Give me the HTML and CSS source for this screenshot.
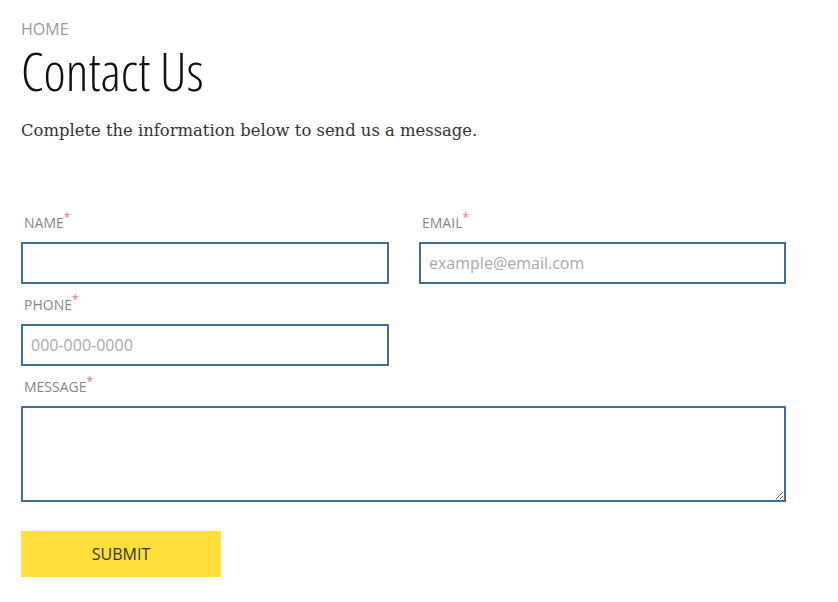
FILE: index.html
```html
<!DOCTYPE html>
<html>
<head>
<meta charset="utf-8">
<link rel="stylesheet" href="styles.css">
</head>
<body>
<div class="page">
  <div class="crumb">HOME</div>
  <h1 class="title">Contact Us</h1>
  <p class="intro">Complete the information below to send us a message.</p>
  <form class="form">
    <div class="row">
      <div class="field">
        <label class="label">NAME<span class="req">*</span></label>
        <input class="input" type="text">
      </div>
      <div class="field">
        <label class="label">EMAIL<span class="req">*</span></label>
        <input class="input" type="text" placeholder="example@email.com">
      </div>
    </div>
    <div class="row">
      <div class="field">
        <label class="label">PHONE<span class="req">*</span></label>
        <input class="input" type="text" placeholder="000-000-0000">
      </div>
      <div class="field"></div>
    </div>
    <div class="field">
      <label class="label">MESSAGE<span class="req">*</span></label>
      <textarea class="textarea"></textarea>
    </div>
    <button class="submit" type="button">SUBMIT</button>
  </form>
</div>
</body>
</html>
```
FILE: styles.css
```css
html, body { margin: 0; padding: 0; background: #fff; }
body { font-family: "Open Sans", sans-serif; }
.page { padding: 19px 21px 0 21px; width: 765px; }
.crumb { font-size: 16px; color: #9a9a9a; line-height: 20px; }
.title {
  margin: 6px 0 0 0;
  font-family: "Open Sans", sans-serif;
  font-weight: 300;
  font-stretch: 75%;
  font-size: 53px;
  line-height: 52px;
  color: #111;
}
.intro {
  margin: 23px 0 0 0;
  font-family: "DejaVu Serif", serif;
  font-size: 16.4px;
  color: #333;
  line-height: 22px;
}
.form { margin-top: 71px; display: flex; flex-direction: column; }
.row { display: grid; grid-template-columns: 368px 367px; column-gap: 30px; }
.field { display: flex; flex-direction: column; }
.label { font-size: 14px; color: #888; padding-left: 3px; line-height: 20px; height: 20px; margin-bottom: 9px; }
.req { color: #f07070; position: relative; top: -6px; font-size: 12px; }
.input {
  box-sizing: border-box; height: 42px; border: 2px solid #416e9a; padding: 0 8px;
  font-family: "Open Sans", sans-serif; font-size: 16px; color: #333; outline: none; margin-bottom: 11px;
  width: 100%;
}
.input::placeholder { color: #aaa; }
.textarea {
  box-sizing: border-box; height: 96px; width: 765px; border: 2px solid #416e9a;
  font-family: "Open Sans", sans-serif; font-size: 16px; margin: 0; resize: both; outline: none;
}
.submit {
  margin-top: 29px; width: 200px; height: 46px; background: #ffe03a; border: none;
  font-family: "Open Sans", sans-serif; font-size: 16px; color: #333; padding: 0; cursor: pointer;
}
```
